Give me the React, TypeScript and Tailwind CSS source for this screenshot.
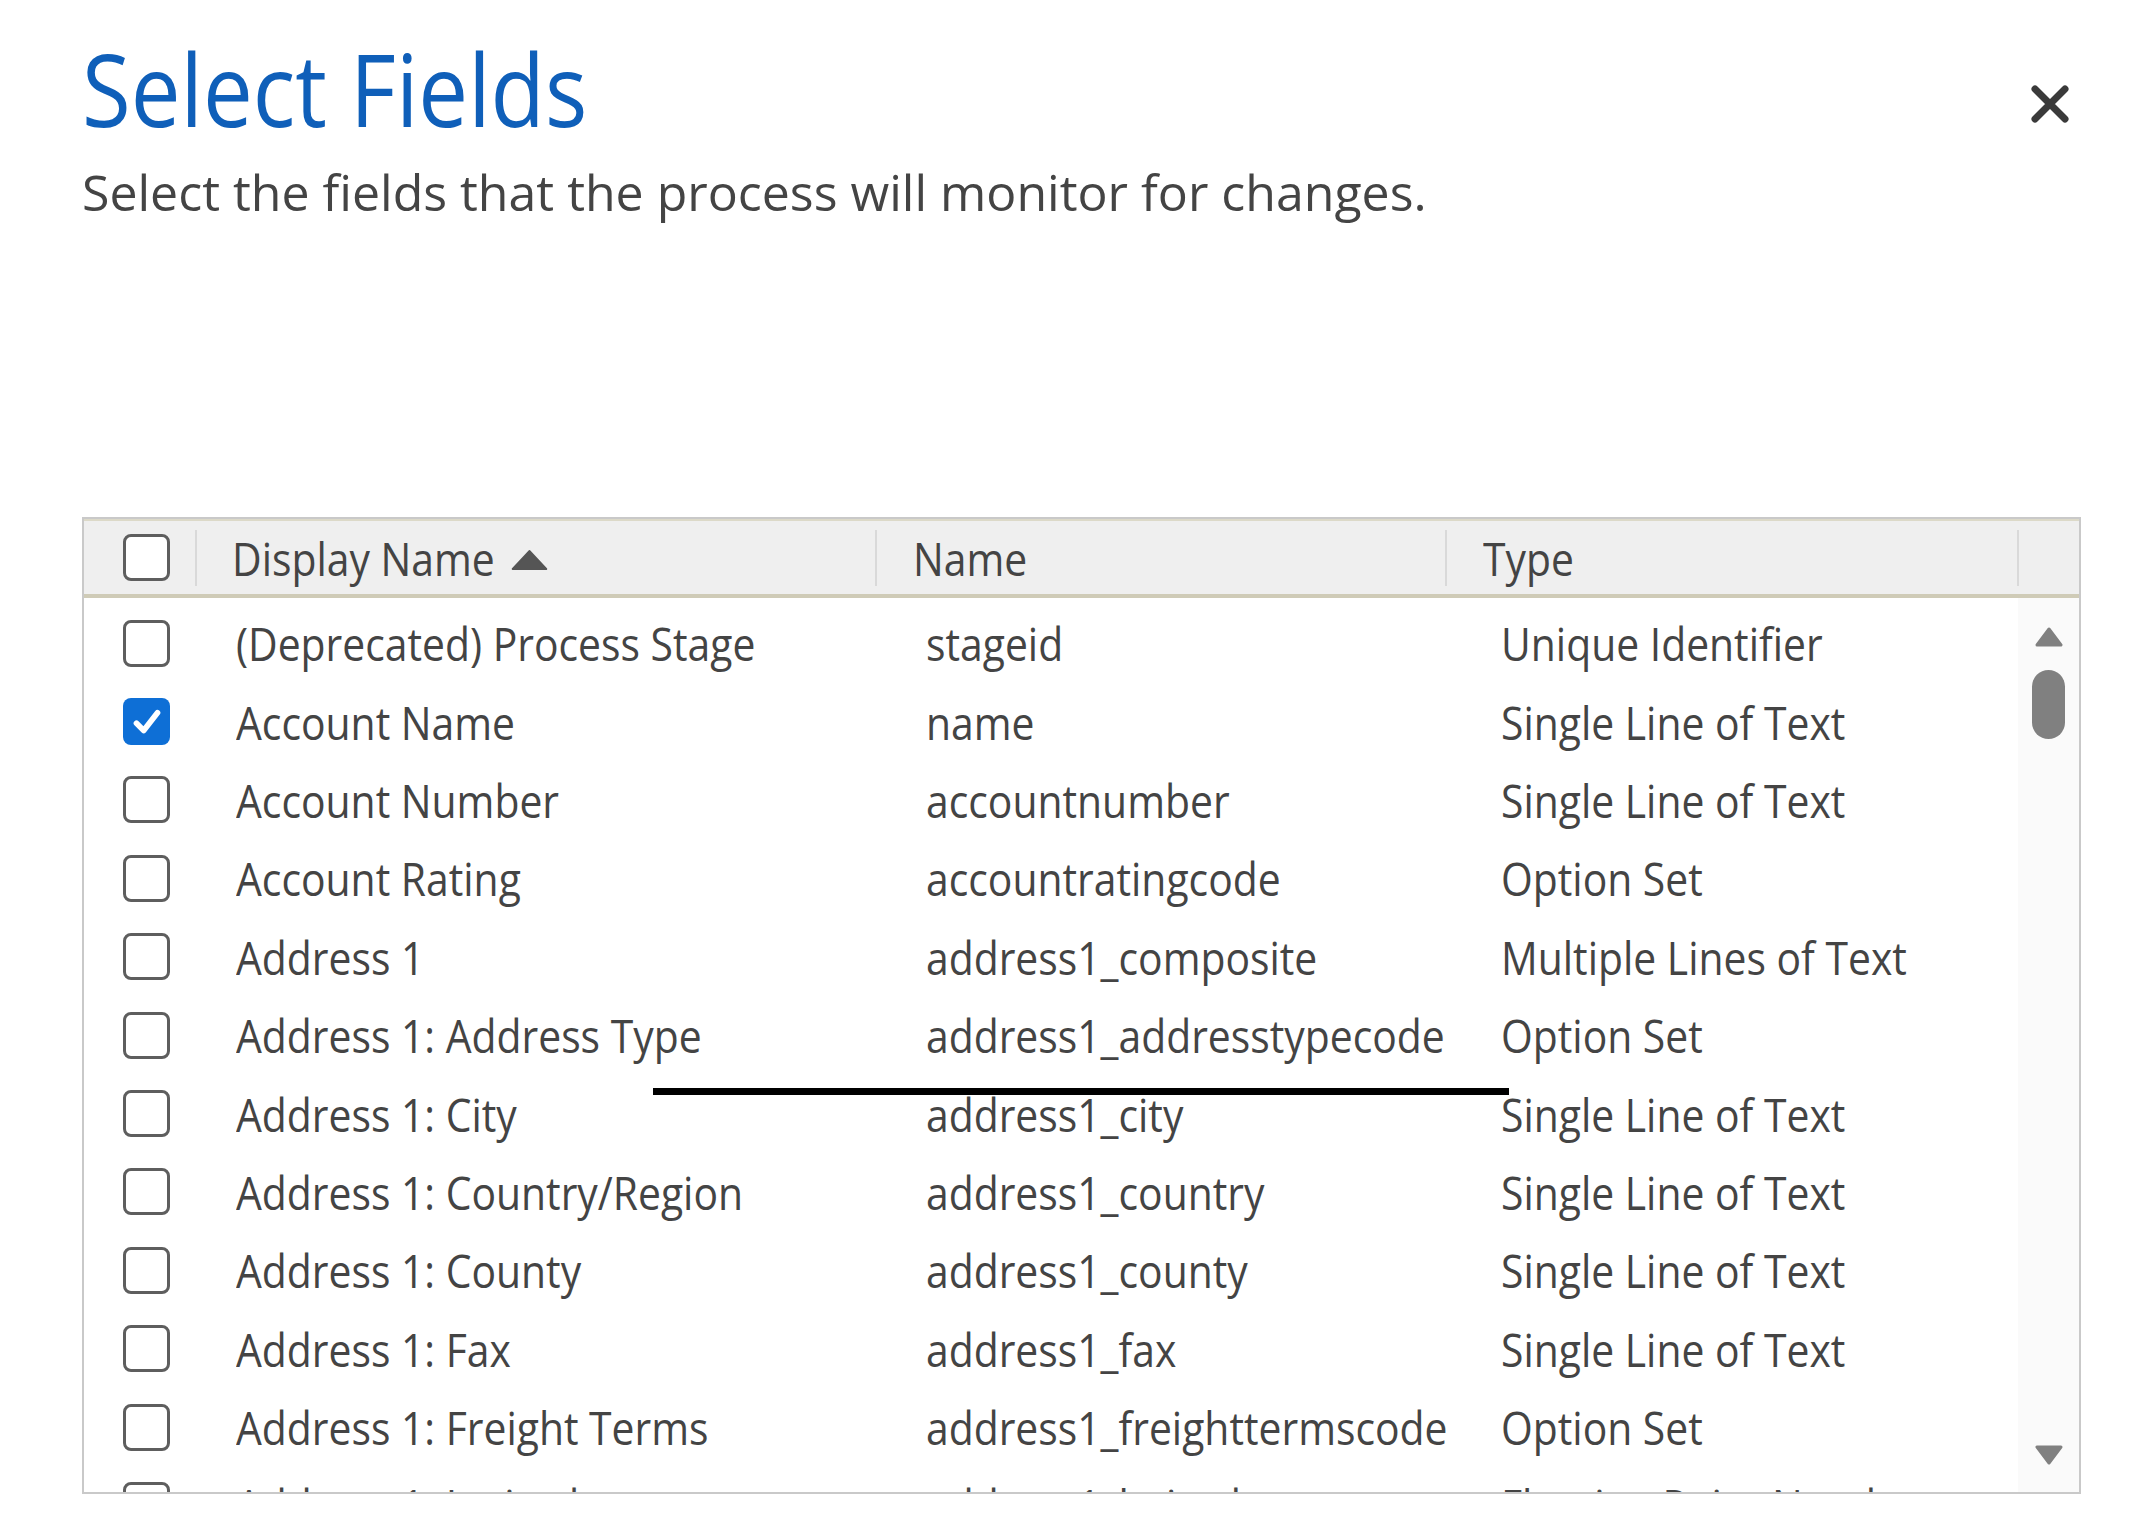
import React from "react";

type Row = { display: string; name: string; type: string; checked?: boolean };

const rows: Row[] = [
  { display: "(Deprecated) Process Stage", name: "stageid", type: "Unique Identifier" },
  { display: "Account Name", name: "name", type: "Single Line of Text", checked: true },
  { display: "Account Number", name: "accountnumber", type: "Single Line of Text" },
  { display: "Account Rating", name: "accountratingcode", type: "Option Set" },
  { display: "Address 1", name: "address1_composite", type: "Multiple Lines of Text" },
  { display: "Address 1: Address Type", name: "address1_addresstypecode", type: "Option Set" },
  { display: "Address 1: City", name: "address1_city", type: "Single Line of Text" },
  { display: "Address 1: Country/Region", name: "address1_country", type: "Single Line of Text" },
  { display: "Address 1: County", name: "address1_county", type: "Single Line of Text" },
  { display: "Address 1: Fax", name: "address1_fax", type: "Single Line of Text" },
  { display: "Address 1: Freight Terms", name: "address1_freighttermscode", type: "Option Set" },
  { display: "Address 1: Latitude", name: "address1_latitude", type: "Floating Point Number" },
];

function Checkbox({ checked }: { checked?: boolean }) {
  if (checked) {
    return (
      <div className="w-[47px] h-[47px] rounded-[8px] bg-[#0e6fd6] flex items-center justify-center">
        <svg width="36" height="36" viewBox="0 0 24 24" fill="none">
          <path d="M5 12.8 L9.8 17.6 L19 5.8" stroke="white" strokeWidth="3.8" strokeLinecap="round" strokeLinejoin="round" />
        </svg>
      </div>
    );
  }
  return <div className="w-[47px] h-[47px] rounded-[8px] border-[3px] border-[#5e5e5e] bg-white" />;
}

function Sep() {
  return <div className="w-[2px] h-[56px] bg-[#d9d9d9] self-center shrink-0" />;
}

function T({ children }: { children: React.ReactNode }) {
  return <span className="inline-block origin-left scale-x-[0.888] whitespace-nowrap">{children}</span>;
}

export default function App() {
  return (
    <div className="relative min-h-screen w-full bg-white font-['Open_Sans',sans-serif] text-[#444444]">
      <div className="pl-[82px] pr-[64px]">
        <div className="flex items-start justify-between">
          <div>
            <h1 className="mt-[38px] text-[100px] leading-[100px] text-[#0f5fb9] font-normal">
              <span className="inline-block origin-left scale-x-[0.888] whitespace-nowrap">Select Fields</span>
            </h1>
            <p className="mt-[29px] text-[50px] leading-[50px]">Select the fields that the process will monitor for changes.</p>
          </div>
          <button className="mt-[84px] mr-[11px] w-[40px] h-[40px] flex items-center justify-center" aria-label="Close">
            <svg width="40" height="40" viewBox="0 0 40 40">
              <path d="M5 5 L35 35 M35 5 L5 35" stroke="#3a3a3a" strokeWidth="7" strokeLinecap="round" />
            </svg>
          </button>
        </div>

        <div className="mt-[300px] h-[977px] border-2 border-[#c9c9c9] flex flex-col overflow-hidden text-[46px] leading-[62px]">
          <div className="h-[79px] shrink-0 flex bg-[#efefef] border-t-[2px] border-t-[#dcd9c8] border-b-[4px] border-b-[#cfcbb7]">
            <div className="w-[111px] shrink-0 flex items-center pl-[39px]">
              <Checkbox />
            </div>
            <Sep />
            <div className="w-[678px] shrink-0 flex items-center pl-[35px]">
              <span className="inline-flex items-center gap-[18px] origin-left scale-x-[0.888] whitespace-nowrap">
                <span>Display Name</span>
                <svg width="42" height="22" viewBox="0 0 42 22" className="mt-[4px]">
                  <path d="M21 2 L40 20 L2 20 Z" fill="#555555" stroke="#555555" strokeWidth="2" strokeLinejoin="round" />
                </svg>
              </span>
            </div>
            <Sep />
            <div className="w-[568px] shrink-0 flex items-center pl-[36px]"><T>Name</T></div>
            <Sep />
            <div className="w-[570px] shrink-0 flex items-center pl-[36px]"><T>Type</T></div>
            <Sep />
            <div className="flex-1" />
          </div>

          <div className="flex-1 flex min-h-0">
            <div className="flex-1 pt-[6px] overflow-hidden">
              {rows.map((r) => (
                <div key={r.name} className="h-[78.4px] grid grid-cols-[152px_690px_575px_1fr] items-center">
                  <div className="pl-[39px] flex items-center">
                    <Checkbox checked={r.checked} />
                  </div>
                  <div><T>{r.display}</T></div>
                  <div><T>{r.name}</T></div>
                  <div><T>{r.type}</T></div>
                </div>
              ))}
            </div>
            <div className="w-[61px] shrink-0 bg-[#fafafa] flex flex-col items-center pt-[29px] pb-[27px]">
              <svg width="28" height="20" viewBox="0 0 28 20">
                <path d="M14 2 L26 18 L2 18 Z" fill="#808080" stroke="#808080" strokeWidth="3" strokeLinejoin="round" />
              </svg>
              <div className="mt-[23px] w-[33px] h-[69px] rounded-full bg-[#808080]" />
              <div className="flex-1" />
              <svg width="28" height="20" viewBox="0 0 28 20">
                <path d="M2 2 L26 2 L14 18 Z" fill="#808080" stroke="#808080" strokeWidth="3" strokeLinejoin="round" />
              </svg>
            </div>
          </div>
        </div>
      </div>

      <div className="absolute left-[653px] top-[1088px] w-[856px] h-[7px] bg-black" />
    </div>
  );
}
